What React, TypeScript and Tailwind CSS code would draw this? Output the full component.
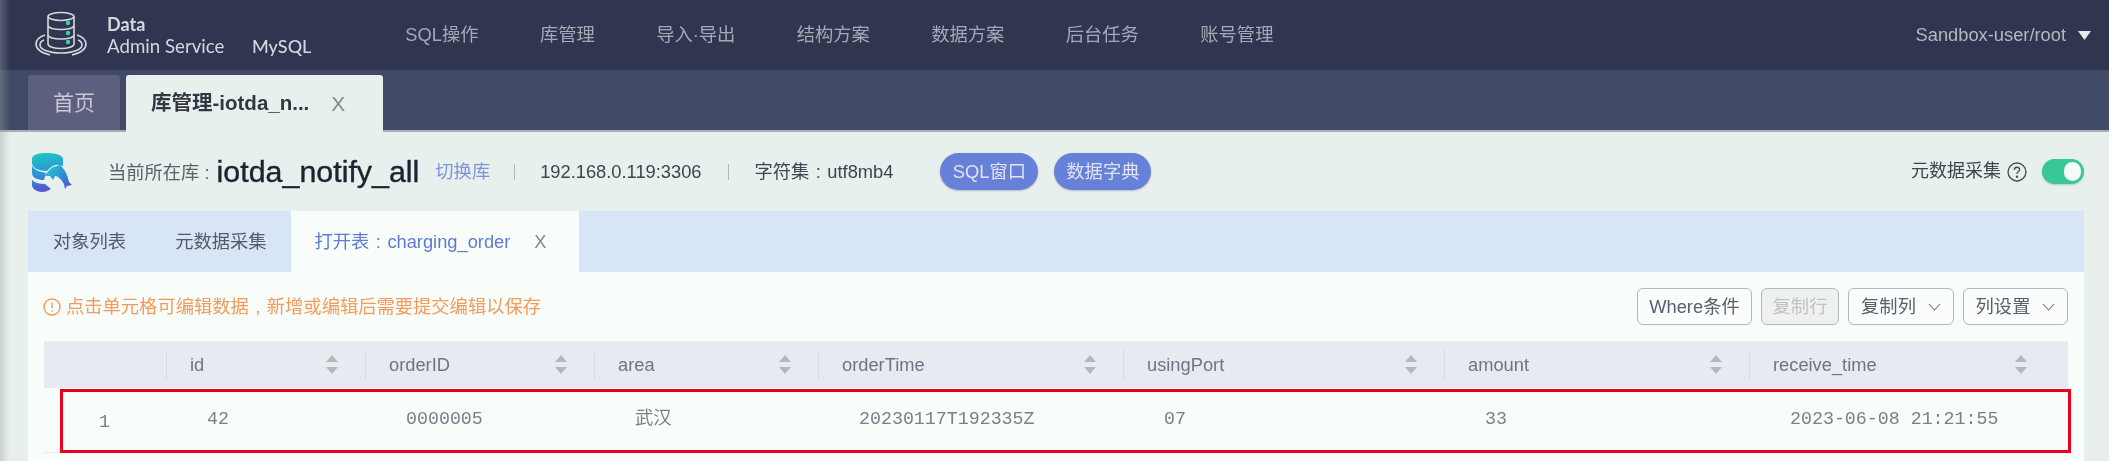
import React from "react";

const navItems = ["SQL操作", "库管理", "导入·导出", "结构方案", "数据方案", "后台任务", "账号管理"];

const columns = [
  { title: "", value: "1" },
  { title: "id", value: "42" },
  { title: "orderID", value: "0000005" },
  { title: "area", value: "武汉" },
  { title: "orderTime", value: "20230117T192335Z" },
  { title: "usingPort", value: "07" },
  { title: "amount", value: "33" },
  { title: "receive_time", value: "2023-06-08 21:21:55" },
];

const gridCols = "grid grid-cols-[122px_199px_229px_224px_305px_321px_305px_319px]";

function LogoIcon() {
  return (
    <svg width="58" height="48" viewBox="0 0 58 48" fill="none" stroke="#d4d7de" strokeWidth="1.6" className="shrink-0">
      <ellipse cx="28" cy="5.5" rx="13" ry="4" />
      <path d="M15 5.5V33c0 2.6 6 4.5 13 4.5s13-1.900 13-4.500V5.500" />
      <path d="M15 14.500c0 2.400 6 4 13 4s13-1.600 13-4" />
      <path d="M15 24c0 2.400 6 4 13 4s13-1.600 13-4" />
      <path d="M12 24C6 26 3 29 3 33c0 5 6 9 14 11" />
      <path d="M44 24c6 2 9 5 9 9 0 5-6 9-14 11" />
      <path d="M11 29c-3 1-4 3-4 5 0 4 8 8 21 8s21-4 21-8c0-2-1-4-4-5" />
      <circle cx="35" cy="12" r="2.200" fill="#2fd8a6" stroke="none" />
      <circle cx="35" cy="22" r="2.200" fill="#2fd8a6" stroke="none" />
      <circle cx="35" cy="31" r="2.200" fill="#2fd8a6" stroke="none" />
    </svg>
  );
}

function DbIcon() {
  return (
    <svg width="42" height="40" viewBox="0 0 42 40" className="shrink-0">
      <defs>
        <linearGradient id="dbg" gradientUnits="userSpaceOnUse" x1="8" y1="0" x2="14" y2="40">
          <stop offset="0" stopColor="#1fc8c4" />
          <stop offset="0.55" stopColor="#2a93d8" />
          <stop offset="1" stopColor="#5a4fd0" />
        </linearGradient>
        <linearGradient id="dolphin" gradientUnits="userSpaceOnUse" x1="16" y1="16" x2="40" y2="36">
          <stop offset="0" stopColor="#2cc6d0" />
          <stop offset="0.6" stopColor="#2a86d4" />
          <stop offset="1" stopColor="#5b4cd0" />
        </linearGradient>
      </defs>
      <path d="M1 7C1 2 9 1 16 1c8 0 16 2 16 6v7c-6-3-12 0-16 5C8 19 1 16 1 11z" fill="url(#dbg)" />
      <path d="M1 14c3 4 8 6 14 7l-2 7C7 28 1 26 1 21z" fill="url(#dbg)" />
      <path d="M1 28c3 3 8 4 13 4l6 5c-3 2-6 3-9 3-5 0-10-3-10-7z" fill="url(#dbg)" />
      <path d="M14 24c3-6 8-10 13-10l1-3 3 4c4 4 6 11 7 15l3 3-5 1-2 3-1-5c-3-5-6-8-9-8l-2 4-3-4z" fill="url(#dolphin)" />
    </svg>
  );
}

function SortIcon() {
  return (
    <svg width="12" height="19" viewBox="0 0 12 19" fill="#b3b9b9" className="shrink-0">
      <path d="M6 0l6 7H0z" />
      <path d="M0 12h12l-6 7z" />
    </svg>
  );
}

function Chevron() {
  return (
    <svg width="13" height="8" viewBox="0 0 13 8" fill="none" stroke="#6f7683" strokeWidth="1.1">
      <path d="M1 1l5.500 6L12 1" />
    </svg>
  );
}

// full-width slot holding a centred latin mark, as the reference's CJK font draws it
function Mark({ char }: { char: string }) {
  return <span className="inline-block w-[18px] text-center">{char}</span>;
}

export default function App() {
  return (
    <div className="relative flex h-[461px] w-[2109px] flex-col overflow-hidden bg-[#e8f0ee] text-[18.3px] [font-family:'Liberation_Sans','Noto_Sans_CJK_SC',sans-serif] blur-[0.5px]">
      {/* Top nav */}
      <div className="flex h-[70px] shrink-0 items-center bg-[#303650]">
        <div className="ml-[33px] flex items-center">
          <LogoIcon />
          <div className="ml-[16px] [font-family:Lato,sans-serif] text-[#d4d7de]">
            <div className="text-[18px] leading-[22px] font-bold">Data</div>
            <div className="flex items-baseline text-[18.700px] leading-[22px]">
              <span className="w-[145px]">Admin Service</span>
              <span className="text-[18px] font-medium">MySQL</span>
            </div>
          </div>
        </div>
        <div className="ml-[94px] flex gap-[61.4px] text-[#a5a9b5]">
          {navItems.map((n) => (
            <span key={n}>{n}</span>
          ))}
        </div>
        <div className="ml-auto mr-[18px] flex items-center gap-[12px] text-[#b4b7c1]">
          <span>Sandbox-user/root</span>
          <svg width="13" height="9" viewBox="0 0 13 9" fill="#e8eaee">
            <path d="M0 0h13L6.500 9z" />
          </svg>
        </div>
      </div>

      {/* Page tabs */}
      <div className="flex h-[62px] shrink-0 items-end gap-[6px] border-b-2 border-[#a8adb8] bg-[#404a66] pl-[28px]">
        <div className="flex h-[55px] w-[92px] items-center justify-center rounded-t-[3px] bg-[#5c5f7e] text-[21px] text-[#c8c9d3]">
          首页
        </div>
        <div className="mb-[-2px] flex h-[57px] w-[257px] items-center rounded-t-[3px] bg-[#e8f0ee] pl-[25px] text-[20.500px] font-bold text-[#333742]">
          <span>库管理-iotda_n...</span>
          <span className="ml-[22px] text-[21px] font-normal text-[#85898f]">X</span>
        </div>
      </div>

      {/* Database info row */}
      <div className="flex h-[79px] shrink-0 items-center text-[#5c6068]">
        <div className="ml-[31px]">
          <DbIcon />
        </div>
        <span className="ml-[35px] mt-[3px]">当前所在库 :</span>
        <span className="ml-[7px] text-[30.400px] text-[#1d2330] [-webkit-text-stroke:0.4px_#1d2330]">iotda_notify_all</span>
        <span className="ml-[16px] text-[#7f93dd]">切换库</span>
        <span className="ml-[24px] h-[16px] w-px bg-[#b4b8bd]" />
        <span className="ml-[25px] text-[#3f444e]">192.168.0.119:3306</span>
        <span className="ml-[27px] h-[16px] w-px bg-[#b4b8bd]" />
        <span className="ml-[25px] text-[#3f444e]">
          字符集
          <Mark char=":" />
          utf8mb4
        </span>
        <button className="ml-[47px] h-[37px] w-[98px] rounded-full bg-[#6780d8] text-[#dfe3f5] shadow-[0_1px_2px_rgba(60,70,120,0.3)]">
          SQL窗口
        </button>
        <button className="ml-[16px] h-[37px] w-[97px] rounded-full bg-[#6780d8] text-[#dfe3f5] shadow-[0_1px_2px_rgba(60,70,120,0.3)]">
          数据字典
        </button>
        <div className="ml-auto mr-[25px] flex items-center text-[#40454e]">
          <span className="text-[18px]">元数据采集</span>
          <svg width="20" height="20" viewBox="0 0 19 19" fill="none" stroke="#4a4f58" strokeWidth="1.3" className="ml-[6px]">
            <circle cx="9.500" cy="9.500" r="8.500" />
            <path d="M7 7.500c0-1.500 1-2.500 2.500-2.500S12 6 12 7.200c0 1.800-2.500 1.900-2.500 4" />
            <circle cx="9.500" cy="14" r="0.500" />
          </svg>
          <div className="relative ml-[15px] h-[25px] w-[42px] rounded-full bg-[#36c897] shadow-[0_1px_2px_rgba(0,0,0,0.2)]">
            <div className="absolute right-[3px] top-[3px] h-[19px] w-[17px] rounded-full bg-[#f6fbf8]" />
          </div>
        </div>
      </div>

      {/* Panel */}
      <div className="ml-[28px] w-[2056px] grow bg-[#f8fdf9]">
        <div className="flex h-[61px] items-stretch bg-[#d8e5f7]">
          <div className="flex items-center pl-[25px] text-[#555a64]">
            <span>对象列表</span>
            <span className="ml-[49px]">元数据采集</span>
          </div>
          <div className="ml-[24px] flex w-[288px] items-center bg-[#f8fdf9] pl-[24px] text-[#5f7bd5]">
            <span>
              打开表
              <Mark char=":" />
              charging_order
            </span>
            <span className="ml-[24px] text-[#85898f]">X</span>
          </div>
        </div>

        <div className="flex h-[69px] items-center justify-between pl-[15px] pr-[16px]">
          <div className="flex items-center text-[#f29b5c]">
            <svg width="18" height="18" viewBox="0 0 18 18" fill="none" stroke="#f29b5c" strokeWidth="1.4">
              <circle cx="9" cy="9" r="8" />
              <path d="M9 4.500v5.500M9 12.200v1.500" />
            </svg>
            <span className="ml-[5px]">
              点击单元格可编辑数据
              <Mark char="," />
              新增或编辑后需要提交编辑以保存
            </span>
          </div>
          <div className="flex gap-[9px] text-[#5a606b]">
            <button className="h-[37px] w-[115px] rounded-[6px] border border-[#b0b8c6] bg-[#fbfdfc]">Where条件</button>
            <button className="h-[37px] w-[78px] rounded-[6px] border border-[#b0b8c6] bg-[#eef1ee] text-[#bfc3c3]">复制行</button>
            <button className="flex h-[37px] w-[106px] items-center justify-center gap-[12px] rounded-[6px] border border-[#b0b8c6] bg-[#fbfdfc]">
              复制列
              <Chevron />
            </button>
            <button className="flex h-[37px] w-[105px] items-center justify-center gap-[12px] rounded-[6px] border border-[#b0b8c6] bg-[#fbfdfc]">
              列设置
              <Chevron />
            </button>
          </div>
        </div>

        <div className="mx-[16px]">
          <div className={`${gridCols} h-[47px] items-center bg-[#e8eaf1] text-[#6e7485]`}>
            {columns.map((c, i) => (
              <div
                key={i}
                className={`flex h-[30px] items-center pl-[23px] ${i === 7 ? "pr-[41px]" : "pr-[27px]"} ${i > 0 ? "border-l border-[#d8dbe0]" : ""}`}
              >
                <span>{c.title}</span>
                {i > 0 && (
                  <span className="ml-auto">
                    <SortIcon />
                  </span>
                )}
              </div>
            ))}
          </div>
          <div className={`${gridCols} h-[65px] items-center border-b border-[#e8eaee] [font-family:'Liberation_Mono','Noto_Sans_CJK_SC',monospace] text-[#7a7f8a]`}>
            {columns.map((c, i) => (
              <div key={i} className={i === 0 ? "pl-[55px] pt-[5px]" : "pl-[41px]"}>
                {c.value}
              </div>
            ))}
          </div>
        </div>
      </div>

      {/* Red highlight frame */}
      <div className="absolute left-[60px] top-[389px] h-[64px] w-[2011px] border-[3px] border-[#e8001c]" />
      {/* Left edge shade */}
      <div className="absolute inset-y-0 left-0 w-[10px] bg-gradient-to-r from-[#9aa0a8]/40 to-transparent" />
    </div>
  );
}
